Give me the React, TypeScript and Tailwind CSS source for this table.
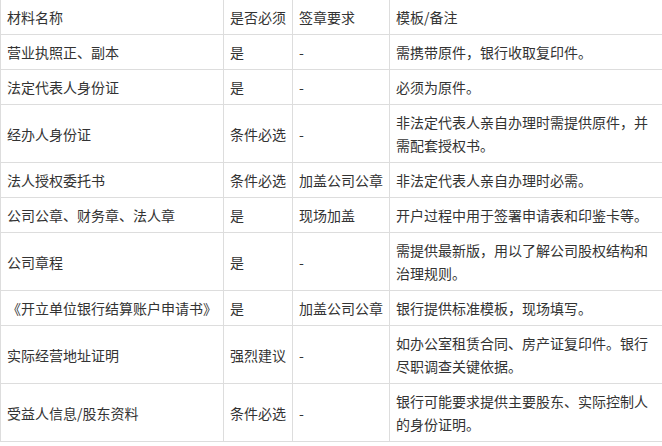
import React from "react";

const rows: [string, string, string, string][] = [
  ["营业执照正、副本", "是", "-", "需携带原件，银行收取复印件。"],
  ["法定代表人身份证", "是", "-", "必须为原件。"],
  ["经办人身份证", "条件必选", "-", "非法定代表人亲自办理时需提供原件，并需配套授权书。"],
  ["法人授权委托书", "条件必选", "加盖公司公章", "非法定代表人亲自办理时必需。"],
  ["公司公章、财务章、法人章", "是", "现场加盖", "开户过程中用于签署申请表和印鉴卡等。"],
  ["公司章程", "是", "-", "需提供最新版，用以了解公司股权结构和治理规则。"],
  ["《开立单位银行结算账户申请书》", "是", "加盖公司公章", "银行提供标准模板，现场填写。"],
  ["实际经营地址证明", "强烈建议", "-", "如办公室租赁合同、房产证复印件。银行尽职调查关键依据。"],
  ["受益人信息/股东资料", "条件必选", "-", "银行可能要求提供主要股东、实际控制人的身份证明。"],
];

const cell =
  "border border-[#dddddd] pl-[6px] pr-[6px] pt-[6px] pb-[5px] align-middle text-left font-normal";

export default function App() {
  return (
    <div
      className="w-[662px] h-[446px] bg-white overflow-hidden text-[#333333] text-[14px] leading-[23px]"
      style={{ fontFamily: '"Microsoft YaHei", "Noto Sans CJK SC", sans-serif' }}
    >
      <table className="border-collapse table-fixed w-[662px] mt-[-1px]">
        <colgroup>
          <col className="w-[223px]" />
          <col className="w-[69px]" />
          <col className="w-[97px]" />
          <col className="w-[273px]" />
        </colgroup>
        <thead>
          <tr>
            <th className={cell}>材料名称</th>
            <th className={cell}>是否必须</th>
            <th className={cell}>签章要求</th>
            <th className={cell}>模板/备注</th>
          </tr>
        </thead>
        <tbody>
          {rows.map((r, i) => (
            <tr key={i}>
              <td className={cell + " whitespace-nowrap"}>{r[0]}</td>
              <td className={cell + " whitespace-nowrap"}>{r[1]}</td>
              <td className={cell + " whitespace-nowrap"}>{r[2]}</td>
              <td className={cell + " text-justify"}>{r[3]}</td>
            </tr>
          ))}
        </tbody>
      </table>
    </div>
  );
}
